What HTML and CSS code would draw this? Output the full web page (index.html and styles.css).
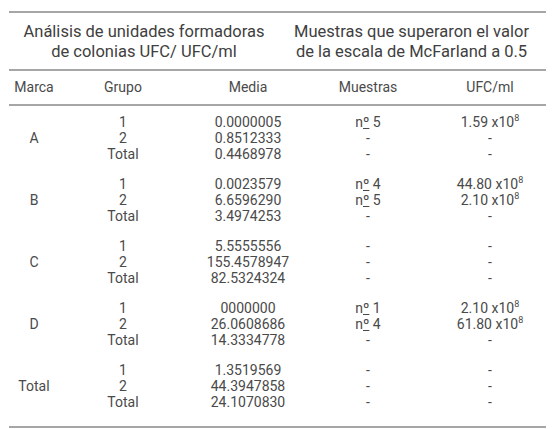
FILE: index.html
```html
<!DOCTYPE html>
<html lang="es">
<head>
<meta charset="utf-8">
<title>Análisis UFC</title>
<link rel="stylesheet" href="styles.css">
</head>
<body>
<div class="tbl">
  <div class="hdr">
    <div class="hgroup hg1">Análisis de unidades formadoras<br>de colonias UFC/ UFC/ml</div>
    <div class="hgroup hg2">Muestras que superaron el valor<br>de la escala de McFarland a 0.5</div>
  </div>
  <div class="row cols">
    <div class="c c1">Marca</div>
    <div class="c c2">Grupo</div>
    <div class="c c3">Media</div>
    <div class="c c4">Muestras</div>
    <div class="c c5">UFC/ml</div>
  </div>
  <div class="row grp">
    <div class="c c1 mid">A</div>
    <div class="c c2"><div>1</div><div>2</div><div>Total</div></div>
    <div class="c c3"><div>0.0000005</div><div>0.8512333</div><div>0.4468978</div></div>
    <div class="c c4"><div>n<span class="ord">º</span> 5</div><div>-</div><div>-</div></div>
    <div class="c c5"><div>1.59 x10<sup>8</sup></div><div>-</div><div>-</div></div>
  </div>
  <div class="row grp">
    <div class="c c1 mid">B</div>
    <div class="c c2"><div>1</div><div>2</div><div>Total</div></div>
    <div class="c c3"><div>0.0023579</div><div>6.6596290</div><div>3.4974253</div></div>
    <div class="c c4"><div>n<span class="ord">º</span> 4</div><div>n<span class="ord">º</span> 5</div><div>-</div></div>
    <div class="c c5"><div>44.80 x10<sup>8</sup></div><div>2.10 x10<sup>8</sup></div><div>-</div></div>
  </div>
  <div class="row grp">
    <div class="c c1 mid">C</div>
    <div class="c c2"><div>1</div><div>2</div><div>Total</div></div>
    <div class="c c3"><div>5.5555556</div><div>155.4578947</div><div>82.5324324</div></div>
    <div class="c c4"><div>-</div><div>-</div><div>-</div></div>
    <div class="c c5"><div>-</div><div>-</div><div>-</div></div>
  </div>
  <div class="row grp">
    <div class="c c1 mid">D</div>
    <div class="c c2"><div>1</div><div>2</div><div>Total</div></div>
    <div class="c c3"><div>0000000</div><div>26.0608686</div><div>14.3334778</div></div>
    <div class="c c4"><div>n<span class="ord">º</span> 1</div><div>n<span class="ord">º</span> 4</div><div>-</div></div>
    <div class="c c5"><div>2.10 x10<sup>8</sup></div><div>61.80 x10<sup>8</sup></div><div>-</div></div>
  </div>
  <div class="row grp last">
    <div class="c c1 mid">Total</div>
    <div class="c c2"><div>1</div><div>2</div><div>Total</div></div>
    <div class="c c3"><div>1.3519569</div><div>44.3947858</div><div>24.1070830</div></div>
    <div class="c c4"><div>-</div><div>-</div><div>-</div></div>
    <div class="c c5"><div>-</div><div>-</div><div>-</div></div>
  </div>
</div>
</body>
</html>
```
FILE: styles.css
```css
html, body {
  margin: 0;
  padding: 0;
  background: #fff;
}
body {
  padding: 11px 8px 0 9px;
  font-family: Roboto, "Liberation Sans", sans-serif;
  color: #4a4a4a;
}
.tbl {
  width: 537px;
  border-top: 2px solid #a6a6a6;
  border-bottom: 2px solid #a6a6a6;
}
.hdr {
  display: grid;
  grid-template-columns: 270px 267px;
  border-bottom: 2px solid #a6a6a6;
}
.hgroup {
  text-align: center;
  font-size: 16.5px;
  line-height: 20px;
  padding: 9px 0 7px;
  color: #404040;
}
.hg2 {
  padding-right: 2px;
}
.row {
  display: grid;
  grid-template-columns: 50px 128px 122px 118px 119px;
  font-size: 14px;
  text-align: center;
}
.cols {
  line-height: 17px;
  padding: 8px 0;
  border-bottom: 2px solid #a6a6a6;
}
.grp {
  line-height: 16px;
  padding: 8px 0 6px;
}
.grp.last {
  padding-bottom: 16px;
}
.mid {
  display: flex;
  align-items: center;
  justify-content: center;
}
.c5 {
  padding-left: 7px;
}
.ord {
  text-decoration: underline;
  text-underline-offset: 1px;
}
sup {
  font-size: 9px;
  line-height: 0;
  vertical-align: 6px;
}
```
